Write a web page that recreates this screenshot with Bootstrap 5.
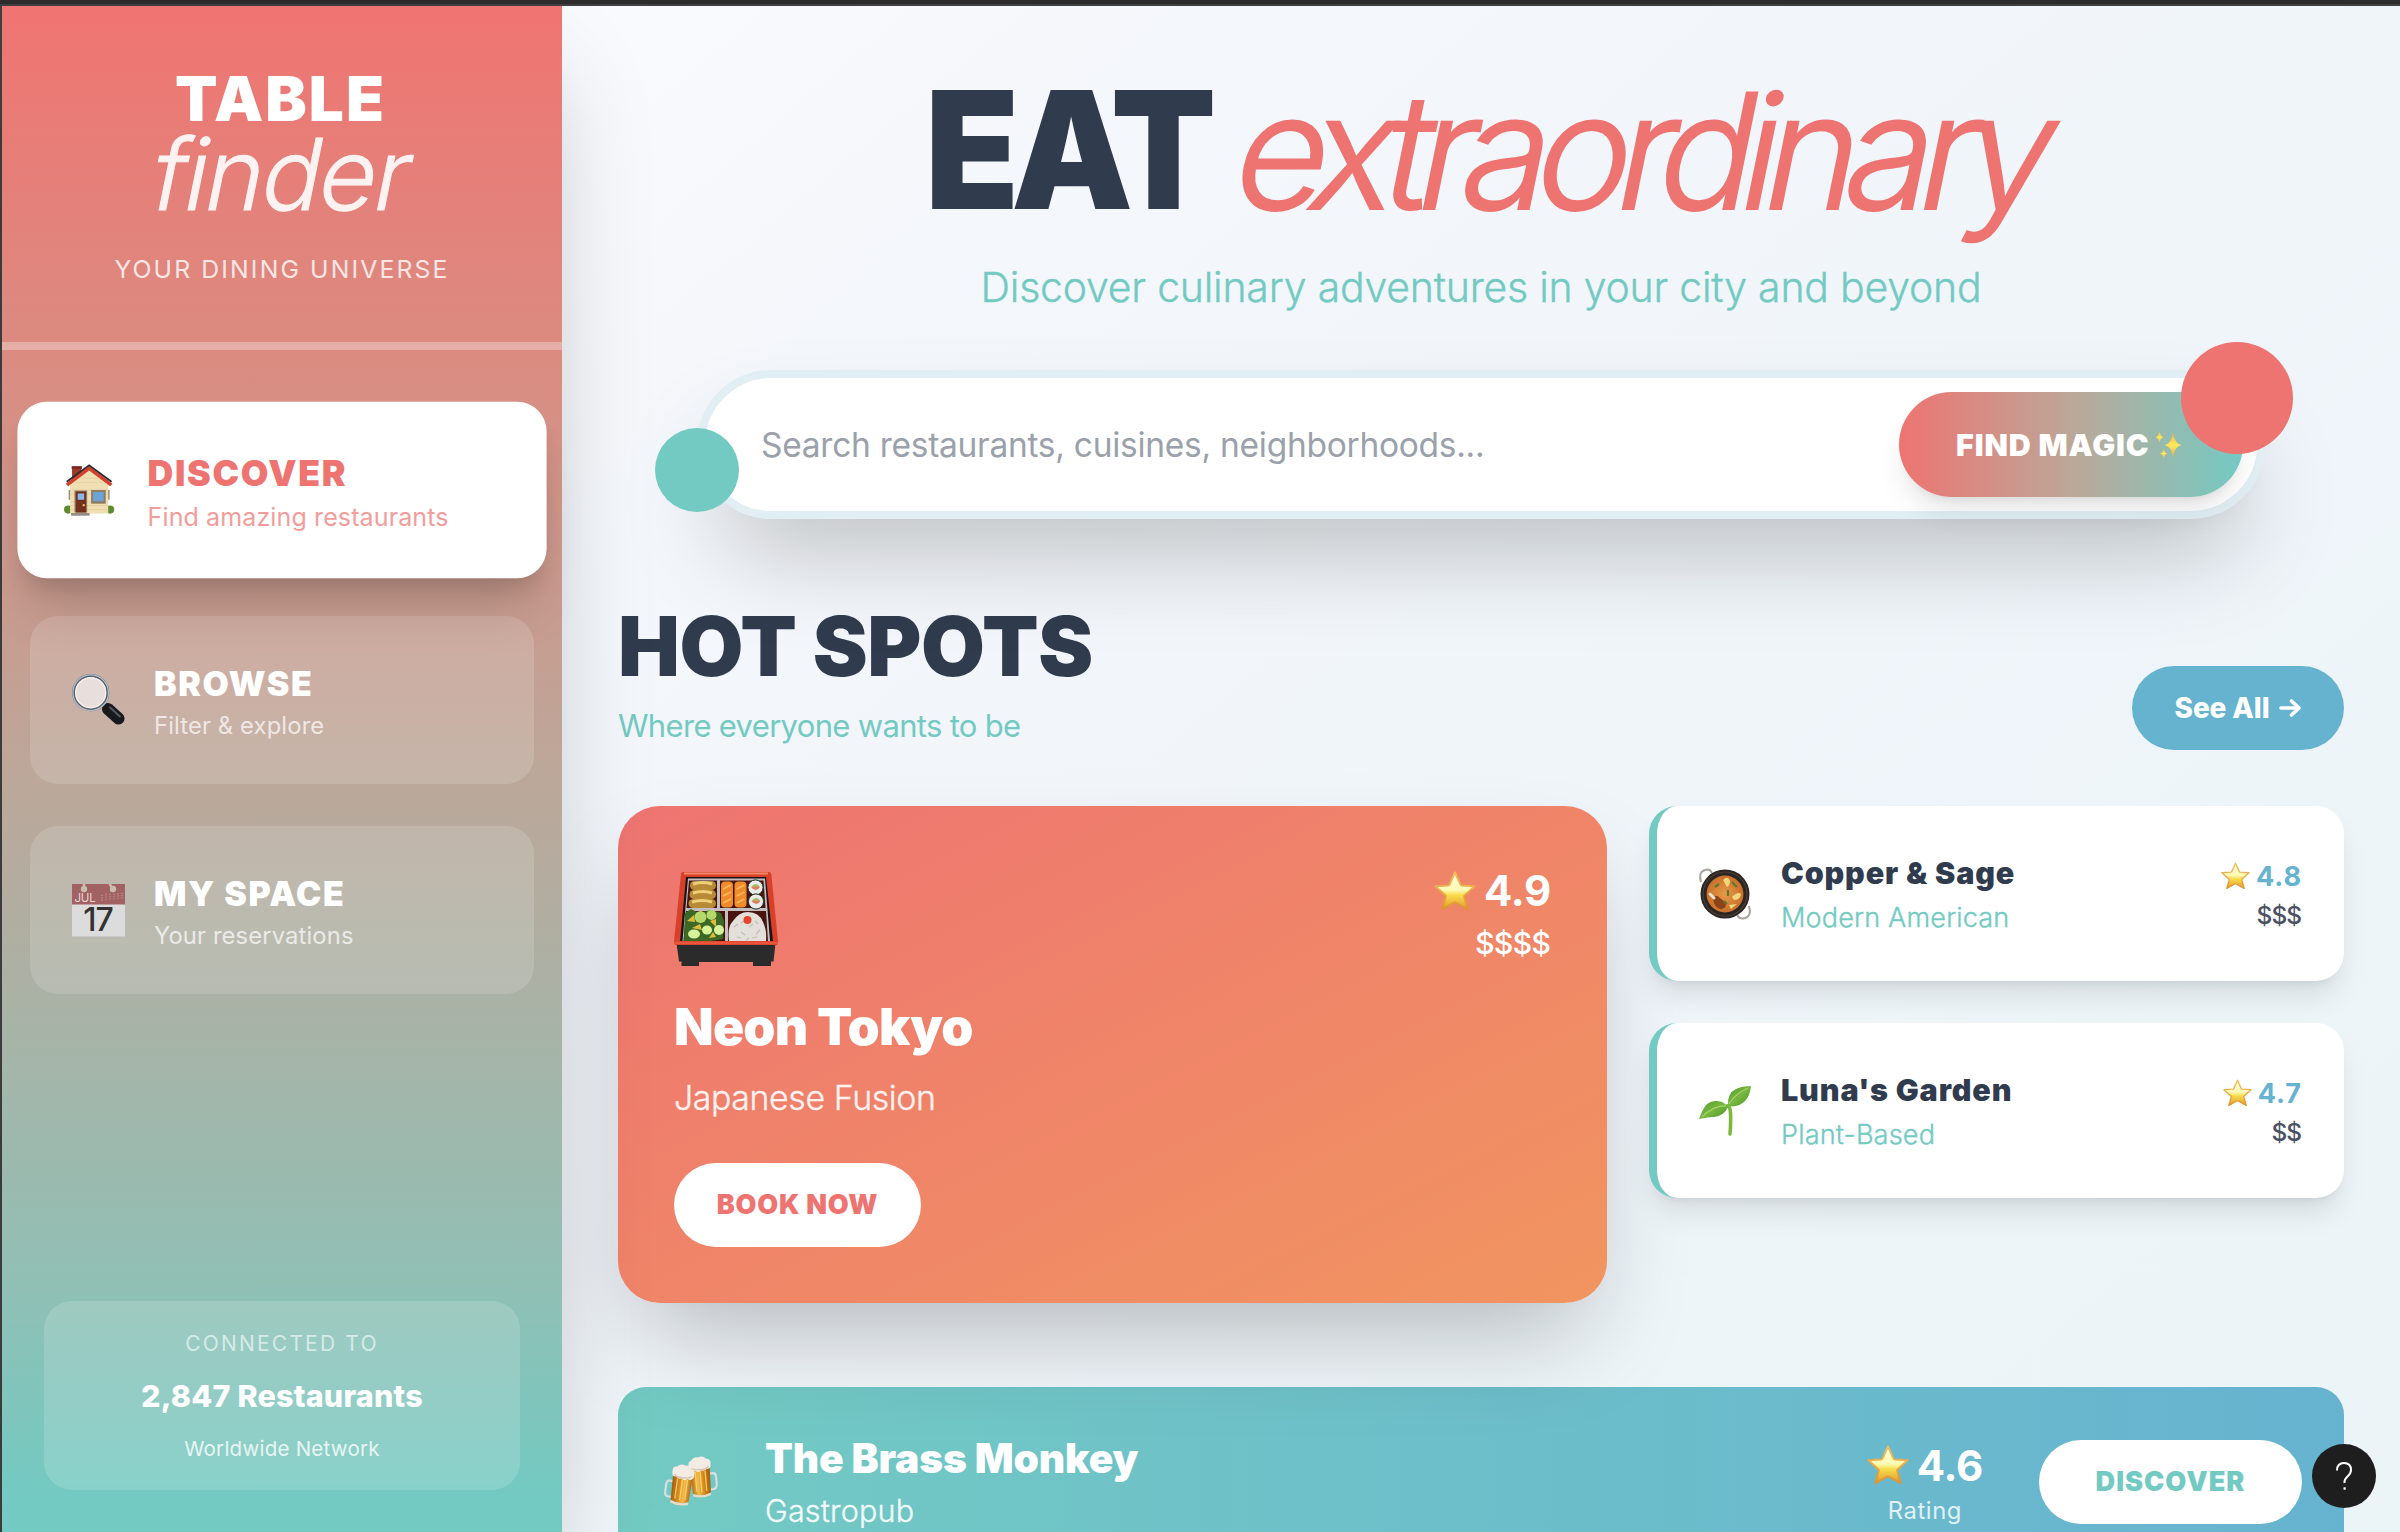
<!DOCTYPE html>
<html lang="en">
<head>
<meta charset="utf-8">
<meta name="viewport" content="width=device-width, initial-scale=1">
<title>Table Finder</title>
<link href="https://cdn.jsdelivr.net/npm/bootstrap@5.3.0/dist/css/bootstrap.min.css" rel="stylesheet">
<style>
:root{--coral:#ee7471;--teal:#73cac3;--sky:#66b3d0;--navy:#303c4e}
html,body{height:1532px;overflow:hidden}
body{font-family:Inter,"Liberation Sans",sans-serif;color:var(--navy);background:#404040;border-top:4px solid #2c2c2c;padding:2px 0 0 2px}
h1,h2,h3,p{margin:0}
svg{display:block;flex:none;overflow:visible}
.shell{height:1526px}
.t-coral{color:var(--coral)}.t-teal{color:var(--teal)}.t-sky{color:var(--sky)}
/* sidebar */
.side{width:560px;background:linear-gradient(180deg,#f07471 0%,#d98d82 24.5%,#bba89a 51%,#a9b2a6 66%,#92bfb4 83%,#72cac2 98%);box-shadow:0 50px 100px -24px rgba(0,0,0,.25);z-index:2}
.side-head{padding:61.5px 0 55.5px;border-bottom:8px solid rgba(255,255,255,.3)}
.brand-a{font-size:62px;line-height:62px;font-weight:900;letter-spacing:2.08px;padding-right:3px}
.brand-b{font-size:99px;line-height:89px;font-weight:300;letter-spacing:-2.2px;opacity:.9;-webkit-text-stroke:1px currentColor}
.slant{display:inline-block;transform:skewX(-11.5deg)}
.brand-c{font-size:24.8px;line-height:35px;letter-spacing:2.11px;margin-top:33px;opacity:.8}
.side-nav{padding:56px 28px 0;gap:42px}
.side-item{height:168px;padding:0 42px;border-radius:28px;background:rgba(255,255,255,.15);gap:28px;color:#fff}
.side-item.current{background:#fff;color:var(--coral);transform:scale(1.05);box-shadow:0 40px 50px -10px rgba(0,0,0,.12),0 16px 20px -8px rgba(0,0,0,.14)}
.item-txt{padding:1px 0 0 1px}
.item-t{font-size:33.9px;line-height:49px;font-weight:900;letter-spacing:1.6px}
.item-s{font-size:23.8px;line-height:35px;letter-spacing:.12px;opacity:.7}
.side-foot{margin:auto 42px 42px;padding:29px 28px 27px;border-radius:28px;background:rgba(255,255,255,.15)}
.foot-a{font-size:21px;line-height:28px;letter-spacing:2.17px;opacity:.6}
.foot-b{font-size:30.5px;line-height:49px;font-weight:800;letter-spacing:.2px;margin:13px 0 15px}
.foot-c{font-size:20.5px;line-height:28px;letter-spacing:.25px;opacity:.8}
/* main */
.stage{background:linear-gradient(to bottom right,#f9fafd 0%,#f4f7fb 18%,#f0f5fa 50%,#ebf4f7 100%);padding:59.5px 56px 0}
.hero-t{font-size:163.5px;line-height:168px;height:168px;font-weight:900;white-space:nowrap}
.hero-lead{display:inline-block;letter-spacing:-8.7px;transform:scaleX(.94);transform-origin:0 50%;margin:0 -24px 0 8px}
.hero-em{font-size:160px;font-weight:300;letter-spacing:-13.7px;margin-left:4px;-webkit-text-stroke:2px currentColor}
.thin{font-weight:300;-webkit-text-stroke:.35px currentColor}
.hero-s{font-size:41px;line-height:56px;letter-spacing:-.23px;margin-top:25.5px}
.finder-wrap{width:1568px;margin:55px auto 0}
.finder-bar{height:149px;border:8px solid #e1eff5;padding:14px 14px 14px 56px;box-shadow:0 50px 100px -24px rgba(0,0,0,.25)}
.finder-bar .form-control,.finder-bar .form-control:focus{border:0;background:none;box-shadow:none;padding:2px 0 0;font-size:33.5px;letter-spacing:-.27px}
.finder-bar .form-control::placeholder{color:#9aa1ab;opacity:1}
.btn{--bs-btn-border-width:0;white-space:nowrap}
.btn-magic,.btn-magic:hover{width:344px;height:105px;padding:0 0 0 57px;gap:6px;color:#fff;font-size:30.5px;font-weight:900;letter-spacing:.85px;background:linear-gradient(90deg,#ee7471,#baa99a 52%,#73cac3);box-shadow:0 20px 30px -6px rgba(0,0,0,.1),0 8px 12px -8px rgba(0,0,0,.1);flex:none}
.orb{border-radius:50%}
.orb-a{width:112px;height:112px;right:-28px;top:-28px;background:var(--coral)}
.orb-b{width:84px;height:84px;left:-42px;top:58px;background:var(--teal)}
.sec-head{margin-top:85px}
.sec-t{font-size:82.5px;line-height:84px;font-weight:900;letter-spacing:-.36px}
.sec-s{font-size:31px;line-height:49px;letter-spacing:-.68px;margin-top:13px}
.btn-all,.btn-all:hover{height:84px;width:212px;background:var(--sky);color:#fff;font-size:28px;font-weight:800;letter-spacing:-.1px;gap:10px}
.spots{margin-top:56px;gap:42px}
.spot-big{width:989px;height:497px;padding:56px;border-radius:42px;color:#fff;background:linear-gradient(to bottom right,#ee7471,#f19560);box-shadow:0 50px 100px -24px rgba(0,0,0,.25)}
.big-top{height:132.5px}
.big-rate{font-size:42px;line-height:56px;font-weight:700;letter-spacing:-.24px;gap:8px;padding-top:1px}
.big-cost{font-size:30.5px;line-height:42px;font-weight:500;letter-spacing:-.94px;margin-top:3px;padding-right:1px}
.big-t{font-size:51.5px;line-height:63px;font-weight:900;letter-spacing:-.75px}
.big-s{font-size:33.9px;line-height:49px;letter-spacing:-.41px;margin-top:15px;opacity:.9}
.btn-book,.btn-book:hover{height:84px;width:247px;margin-top:41.5px;background:#fff;color:var(--coral);font-size:27px;font-weight:900;letter-spacing:.75px}
.spot-list{gap:42px}
.spot-sm{height:175px;padding:0 42px;border-left:8px solid var(--teal);border-radius:28px;background:#fff;box-shadow:0 20px 30px -6px rgba(0,0,0,.1),0 8px 12px -8px rgba(0,0,0,.1)}
.sm-txt{margin-left:30px;padding-top:3px}
.sm-t{font-size:30.5px;line-height:45px;font-weight:900;letter-spacing:.85px}
.sm-s{font-size:27.1px;line-height:45px;letter-spacing:.15px}
.sm-rate{font-size:27.1px;line-height:39px;font-weight:700;letter-spacing:.9px;gap:6px}
.sm-cost{font-size:24.5px;line-height:39px;font-weight:500;letter-spacing:-1.03px;padding-right:1px;color:#4a5163}
.strip{height:190px;margin-top:84px;padding:0 42px;border-radius:28px;color:#fff;background:linear-gradient(90deg,#73cac3,#66b3d0)}
.strip-txt{padding:6px 0 0 43px}
.strip-t{font-size:40.7px;line-height:52px;font-weight:900;letter-spacing:-.14px}
.strip-s{font-size:30.5px;line-height:52px;letter-spacing:.2px;opacity:.9}
.strip-rate{padding-top:11px}
.strip-r{font-size:42px;line-height:45px;font-weight:700;letter-spacing:-.29px;gap:8px}
.strip-l{font-size:23.8px;line-height:45px;letter-spacing:.6px;opacity:.8}
.btn-disc,.btn-disc:hover{height:84px;width:263px;margin-left:56px;background:#fff;color:var(--teal);font-size:27.1px;font-weight:900;letter-spacing:1px}
.help{width:64px;height:64px;left:2312px;top:1444px;background:#1e1e1e;z-index:5}
</style>
</head>
<body>
<svg width="0" height="0" class="position-absolute">
  <defs>
    <linearGradient id="gStar" x1="0" y1="0" x2="0" y2="1"><stop offset="0" stop-color="#fffbd8"/><stop offset=".48" stop-color="#fffab4"/><stop offset=".62" stop-color="#f9dc4c"/><stop offset="1" stop-color="#e09a2c"/></linearGradient>
    <linearGradient id="gEdge" x1="0" y1="0" x2="0" y2="1"><stop offset="0" stop-color="#f0c060"/><stop offset="1" stop-color="#e0952e"/></linearGradient>
    <linearGradient id="gBeer" x1="0" x2="1"><stop offset="0" stop-color="#b56a10"/><stop offset=".35" stop-color="#f3bc4a"/><stop offset=".6" stop-color="#d98f1e"/><stop offset="1" stop-color="#a55a0c"/></linearGradient>
    <linearGradient id="gLeaf" x1="0" y1="0" x2="1" y2="1"><stop offset="0" stop-color="#4f9a2c"/><stop offset=".5" stop-color="#77b83f"/><stop offset="1" stop-color="#4c8f26"/></linearGradient>
    <linearGradient id="gSpark" x1="0" y1="0" x2="0" y2="1"><stop offset="0" stop-color="#f2b03a"/><stop offset=".5" stop-color="#ffe85f"/><stop offset="1" stop-color="#eda93a"/></linearGradient>
    <radialGradient id="gCurry"><stop offset="0" stop-color="#e89a48"/><stop offset="1" stop-color="#c8702a"/></radialGradient>
    <symbol id="star" viewBox="0 0 42 40"><path d="M21 1.5 L26.4 13.4 Q26.8 14.3 27.8 14.4 L40.6 15.2 L30.6 24.4 Q30 25 30.2 26 L33.6 38 L22 31.6 Q21 31 20 31.6 L8.4 38 L11.8 26 Q12 25 11.4 24.4 L1.4 15.2 L14.2 14.4 Q15.2 14.3 15.6 13.4Z" fill="url(#gStar)" stroke="url(#gEdge)" stroke-width="2" stroke-linejoin="round"/></symbol>
    <symbol id="mug" viewBox="0 0 28 42"><path d="M20 18 h3.500 q3 0 3 4 v7 q0 5 -4.500 5 h-3" fill="none" stroke="#d9dfe0" stroke-width="2.200"/><path d="M1 10 h20 l-1 27 q-9 4 -18 0Z" fill="url(#gBeer)"/><path d="M6 15 v20 M11 15 v21 M16 15 v20" stroke="#ffdb7c" stroke-width="1.3" opacity=".8"/><path d="M2 37 q9 4 18 0 l0 2.6 q-9 3.4 -18 0Z" fill="#e6dcc6"/><path d="M0 11 q-2-6 3-7 q2-4 7-3 q5-2 8 2 q5 0 4 6 q0 5-4 4 q-3 3-6 1 q-3 3-6 0 q-5 2-6-3Z" fill="#f3ebe4"/><path d="M2 11 q4 3 8 2 q5 2 10-2" fill="none" stroke="#d8c7b4" stroke-width="1.4"/></symbol>
  </defs>
</svg>

<div class="shell d-flex">
  <aside class="side d-flex flex-column text-white position-relative flex-shrink-0">
    <header class="side-head text-center">
      <div class="brand-a">TABLE</div>
      <div class="brand-b"><span class="slant">finder</span></div>
      <p class="brand-c">YOUR DINING UNIVERSE</p>
    </header>
    <nav class="side-nav d-flex flex-column">
      <a href="#" class="side-item current d-flex align-items-center text-decoration-none">
        <svg width="53" height="53" viewBox="-1.800 -2 57 57">
          <circle cx="5" cy="46" r="4.2" fill="#5f8a2f"/><circle cx="48" cy="46" r="4.2" fill="#5f8a2f"/>
          <path d="M9 3h9.5v13L9 21z" fill="#9c3a2c"/><path d="M8.6 1.5h10.4v3H8.6z" fill="#7c2a20"/>
          <path d="M5.500 26h2.500v10H5.500zM45 26h2.500v10H45z" fill="#9a8b7c"/>
          <path d="M7 20 26.500 5 46 20v30H7z" fill="#f1dfb4"/>
          <path d="M7 26h39M7 30h39M7 38h39M7 42h39M7 46h39M13 18h27M18 14h17" stroke="#e3cd9c" stroke-width=".8"/>
          <path d="M2.500 19.500 26.500 1.500 50.500 19.500 48 22 26.500 6 5 22z" fill="#d2412e"/>
          <path d="M3.500 17.500 26.500 .6 49.500 17.500" fill="none" stroke="#2b2a29" stroke-width="1.800"/>
          <path d="M11.500 26.500h13V49h-13z" fill="#8f8068"/><path d="M12.800 27.500h10.600V49H12.800z" fill="#74301d"/><path d="M14.800 29.500h6.600v6.500h-6.600z" fill="#86b9ea"/><circle cx="21" cy="41.500" r="1.200" fill="#e5b94a"/>
          <path d="M28.500 26h15v14h-15z" fill="#8f7c62"/><path d="M30.500 28h11v9.500h-11z" fill="#6ca3d8"/>
          <path d="M8 49.500h19v2.800H8z" fill="#958c84"/>
        </svg>
        <div class="item-txt"><div class="item-t">DISCOVER</div><div class="item-s">Find amazing restaurants</div></div>
      </a>
      <a href="#" class="side-item d-flex align-items-center text-decoration-none">
        <svg width="53" height="53" viewBox="0 0 53 53">
          <path d="M30 30 35 34.500" stroke="#8a8f93" stroke-width="4"/>
          <path d="M36 35 46.500 44.500" stroke="#17191c" stroke-width="12" stroke-linecap="round"/><path d="M38 33.500 48 42.500" stroke="#555a60" stroke-width="2" stroke-linecap="round"/>
          <circle cx="18.700" cy="18.700" r="17" fill="#e8dfdd" stroke="#5b646b" stroke-width="3.200"/>
          <circle cx="18.700" cy="18.700" r="17.800" fill="none" stroke="#b5c3d1" stroke-width="1.200"/><circle cx="18.700" cy="18.700" r="15" fill="none" stroke="#f6efed" stroke-width="1.400"/>
        </svg>
        <div class="item-txt"><div class="item-t">BROWSE</div><div class="item-s">Filter &amp; explore</div></div>
      </a>
      <a href="#" class="side-item d-flex align-items-center text-decoration-none">
        <svg width="53" height="53" viewBox="0 0 53 53">
          <path d="M0 0h53v53H0z" fill="#dcdcdc"/><path d="M0 0h53v20.500H0z" fill="#a26162"/><path d="M0 52h53v1H0z" fill="#c9c9c9"/>
          <path d="M12 0v4M37.500 0l3 4" stroke="#c8bdb0" stroke-width="2.500"/><circle cx="12" cy="5" r="3.200" fill="#c8bdb0"/><circle cx="41" cy="5" r="3.200" fill="#c8bdb0"/>
          <path d="M30 16.500v-6M34 16v-7M38 15.500v-6M42 15.500v-6M46 15v-6M50 14.500V8" stroke="#bb8a88" stroke-width="1.600" stroke-dasharray="1.300 .9"/>
          <text x="2.500" y="17.500" font-family="Inter" font-size="11.500" letter-spacing="-.2" fill="#e6d6d4">JUL</text>
          <text x="26" y="47" text-anchor="middle" font-family="Inter" font-size="32" font-weight="500" letter-spacing="-1" fill="#333">17</text>
        </svg>
        <div class="item-txt"><div class="item-t">MY SPACE</div><div class="item-s">Your reservations</div></div>
      </a>
    </nav>
    <div class="side-foot text-center">
      <div class="foot-a">CONNECTED TO</div>
      <div class="foot-b">2,847 Restaurants</div>
      <div class="foot-c">Worldwide Network</div>
    </div>
  </aside>

  <main class="stage flex-grow-1">
    <header class="text-center">
      <h1 class="hero-t"><span class="hero-lead">EAT</span> <span class="hero-em slant t-coral">extraordinary</span></h1>
      <p class="hero-s thin t-teal">Discover culinary adventures in your city and beyond</p>
    </header>

    <div class="finder-wrap position-relative">
      <form class="finder-bar d-flex align-items-center bg-white rounded-pill">
        <input class="form-control" type="text" placeholder="Search restaurants, cuisines, neighborhoods...">
        <button type="button" class="btn btn-magic rounded-pill d-flex align-items-center">FIND MAGIC
          <svg width="27" height="28" viewBox="0 0 27 28" fill="url(#gSpark)"><path d="M18 1 Q19 12.500 26.500 14 Q19 15.500 18 27 Q17 15.500 9.500 14 Q17 12.500 18 1Z"/><path d="M4.500 0 Q5 5.500 8.500 6.200 Q5 7 4.500 12.500 Q4 7 .5 6.200 Q4 5.500 4.500 0Z"/><path d="M8.800 17 Q9.300 22 12.500 22.500 Q9.300 23.200 8.800 28 Q8.300 23.200 5 22.500 Q8.300 22 8.800 17Z"/></svg>
        </button>
      </form>
      <span class="orb orb-a position-absolute"></span>
      <span class="orb orb-b position-absolute"></span>
    </div>

    <div class="sec-head d-flex justify-content-between align-items-end">
      <div>
        <h2 class="sec-t">HOT SPOTS</h2>
        <p class="sec-s t-teal">Where everyone wants to be</p>
      </div>
      <button class="btn btn-all rounded-pill d-flex align-items-center justify-content-center">See All
        <svg width="22" height="18" viewBox="0 0 22 18" fill="none" stroke="#fff" stroke-width="3.600" stroke-linecap="round" stroke-linejoin="round"><path d="M2 9h17.500M12.500 2l7.500 7-7.500 7"/></svg>
      </button>
    </div>

    <div class="spots d-flex align-items-start">
      <article class="spot-big flex-shrink-0">
        <div class="big-top d-flex justify-content-between align-items-start">
          <svg width="105" height="105" viewBox="0 -10 105 105">
            <path d="M2.500 71h99l-2 18.500H97V94H79v-4H25v4H7.500v-4.500H5z" fill="#2a2b2a"/>
            <path d="M9 0h86q2 0 2.300 2L104 69q.2 4-2 4H2q-2.300 0-2-4L7 2q.2-2 2-2z" fill="#d8402a"/>
            <path d="M10 1.500h84" stroke="#ef8a68" stroke-width="2"/>
            <path d="M12 5h80l7 64H6z" fill="#1d1414"/>
            <path d="M14 6.500h77l5 62.500H8.500z" fill="#c4bec2"/>
            <path d="M15 8.500h28V36H12.500zM46 8.500h43.500L91.500 36H46zM12 39h39v30H9.500zM54 39h38l2 30H54z" fill="#47150e"/>
            <g fill="#b98a35"><rect x="16" y="9" width="26" height="9" rx="4.500"/><rect x="15.500" y="18" width="26.500" height="9" rx="4.500"/><rect x="14.500" y="27" width="27.500" height="9" rx="4.500"/></g>
            <path d="M19 12q10-3 19 0M19 21q10-3 19 0M18 30q10-3 20 0" fill="none" stroke="#ecd07a" stroke-width="3"/>
            <rect x="47" y="9.500" width="12" height="26" rx="4" fill="#f08b2c"/><rect x="60.500" y="9.500" width="12" height="26" rx="4" fill="#f08b2c"/>
            <path d="M49 17l8-4M49 24l8-4M49 31l8-4M62.500 17l8-4M62.500 24l8-4M62.500 31l8-4" stroke="#ffb85c" stroke-width="1.600"/>
            <g fill="#e9ece8" stroke="#1d3029" stroke-width="1"><circle cx="81.500" cy="15.500" r="7.600"/><circle cx="82" cy="29.500" r="7.600"/></g>
            <g fill="#a9b865"><path d="M77 15q5-6 9 0zM77.500 29q5-6 9 0z"/></g><g fill="#e8785f"><path d="M77 15h9q-4 6-9 0zM77.500 29h9q-4 6-9 0z"/></g>
            <path d="M11 41l6-4 8 4 12-3 10 3 3 8-1 18-12 2H10z" fill="#3c6a26"/>
            <g fill="#b6d86a"><circle cx="26.500" cy="45" r="6"/><circle cx="37.500" cy="43" r="5"/></g>
            <g fill="#d8f29a"><ellipse cx="20" cy="62" rx="6" ry="4.500"/><ellipse cx="33" cy="58" rx="5" ry="4.500"/><ellipse cx="45" cy="58" rx="5" ry="5"/></g>
            <g fill="#dfbd3c"><path d="M13 49l7-6 1 7zM18 56l8-4 2 6zM36 49l6-2 0 8zM35 66l4-6 3 5z"/></g>
            <path d="M55 69q-2-14 4-20 6-9 15-9 11 0 15 10 4 8 3 19z" fill="#e3e0dc"/>
            <path d="M60 55l4-3M67 60l4 3M75 55l4-3M82 62l4-4M63 65l4 1M78 66l5-1M70 49l-3 2M81 49l3 3M72 68l3-2" stroke="#c2bdb7" stroke-width="1.200"/>
            <circle cx="73.500" cy="48" r="4" fill="#e3452c"/>
            <path d="M.5 71h103" stroke="#e8573c" stroke-width="2.500"/>
          </svg>
          <div class="text-end">
            <div class="big-rate d-flex align-items-center"><svg width="42" height="40"><use href="#star"/></svg>4.9</div>
            <div class="big-cost">$$$$</div>
          </div>
        </div>
        <h3 class="big-t">Neon Tokyo</h3>
        <p class="big-s thin">Japanese Fusion</p>
        <button class="btn btn-book rounded-pill">BOOK NOW</button>
      </article>

      <div class="spot-list d-flex flex-column flex-grow-1">
        <article class="spot-sm d-flex align-items-center">
          <svg width="52" height="52" viewBox="0 0 52 52">
            <g fill="none" stroke="#a9a39c" stroke-width="2"><path d="M2 14Q-1 4 6 2q5-2 7 3"/><path d="M50 38q3 10-4 12-5 2-8-3"/></g>
            <circle cx="26" cy="26" r="24.500" fill="#2c2521"/><circle cx="26" cy="26" r="22" fill="none" stroke="#4a4039" stroke-width="1.200"/>
            <circle cx="26" cy="26" r="18.500" fill="url(#gCurry)"/>
            <path d="M24 12q5-5 7 1 0 4-3 6zM33 29q6-6 9-3-1 6-7 6zM30 37l8-1-6 5z" fill="#f4d67c"/>
            <path d="M14 29q3-3 7 1 6 4 6 8-3 5-8 2-5-3-5-11z" fill="#8a431a"/><path d="M11 26l4 4" stroke="#efe3cd" stroke-width="3" stroke-linecap="round"/>
            <path d="M33 14l5 5M16 19l4-3M29 22v6M25 33l3 3" stroke="#5d7a28" stroke-width="2.200"/>
          </svg>
          <div class="sm-txt flex-grow-1"><h3 class="sm-t">Copper &amp; Sage</h3><p class="sm-s thin t-teal">Modern American</p></div>
          <div class="text-end pt-1"><div class="sm-rate t-sky d-flex align-items-center"><svg width="29" height="28"><use href="#star"/></svg>4.8</div><div class="sm-cost">$$$</div></div>
        </article>
        <article class="spot-sm d-flex align-items-center">
          <svg width="52" height="52" viewBox="0 0 52 52">
            <path d="M28 21Q31 20 31.500 28T31 49" fill="none" stroke="#7cba3e" stroke-width="3.600" stroke-linecap="round"/>
            <path d="M29 21Q28 8 37 4q6-3 15-3-1 10-6 15-7 7-17 5z" fill="url(#gLeaf)"/><path d="M30 19Q36 9 49 3" fill="none" stroke="#a4d26a" stroke-width="1.300"/>
            <path d="M29 22Q24 15 16 16 8 17 5 23 2 28 0 34q9-2 15-2 10-1 14-10z" fill="url(#gLeaf)"/><path d="M27 21Q15 20 3 32" fill="none" stroke="#a4d26a" stroke-width="1.300"/>
          </svg>
          <div class="sm-txt flex-grow-1"><h3 class="sm-t">Luna's Garden</h3><p class="sm-s thin t-teal">Plant-Based</p></div>
          <div class="text-end pt-1"><div class="sm-rate t-sky d-flex align-items-center"><svg width="29" height="28"><use href="#star"/></svg>4.7</div><div class="sm-cost">$$</div></div>
        </article>
      </div>
    </div>

    <article class="strip d-flex align-items-center">
      <svg width="62" height="54" viewBox="-6.500 -1 62 54">
        <g transform="translate(23 0) rotate(-5 14 20)"><use href="#mug" width="28" height="42"/></g>
        <g transform="translate(29 10) rotate(8) scale(-1 1)"><use href="#mug" width="28" height="42"/></g>
      </svg>
      <div class="strip-txt flex-grow-1"><h3 class="strip-t">The Brass Monkey</h3><p class="strip-s thin">Gastropub</p></div>
      <div class="strip-rate text-center"><div class="strip-r d-flex align-items-center"><svg width="42" height="40"><use href="#star"/></svg>4.6</div><div class="strip-l">Rating</div></div>
      <button class="btn btn-disc rounded-pill">DISCOVER</button>
    </article>
  </main>
</div>

<button class="help btn rounded-circle position-absolute p-0 d-flex align-items-center justify-content-center" aria-label="Help">
  <svg width="16" height="28" viewBox="0 0 16 28" fill="none" stroke="#fff" stroke-width="2"><path d="M1 8.500Q1 1 8 1t7 7q0 3.500-3.500 6.500T8.500 21"/><path d="M7.500 26.500h2.200" stroke-width="2.400"/></svg>
</button>
<script src="https://cdn.jsdelivr.net/npm/bootstrap@5.3.0/dist/js/bootstrap.bundle.min.js"></script>
</body>
</html>
